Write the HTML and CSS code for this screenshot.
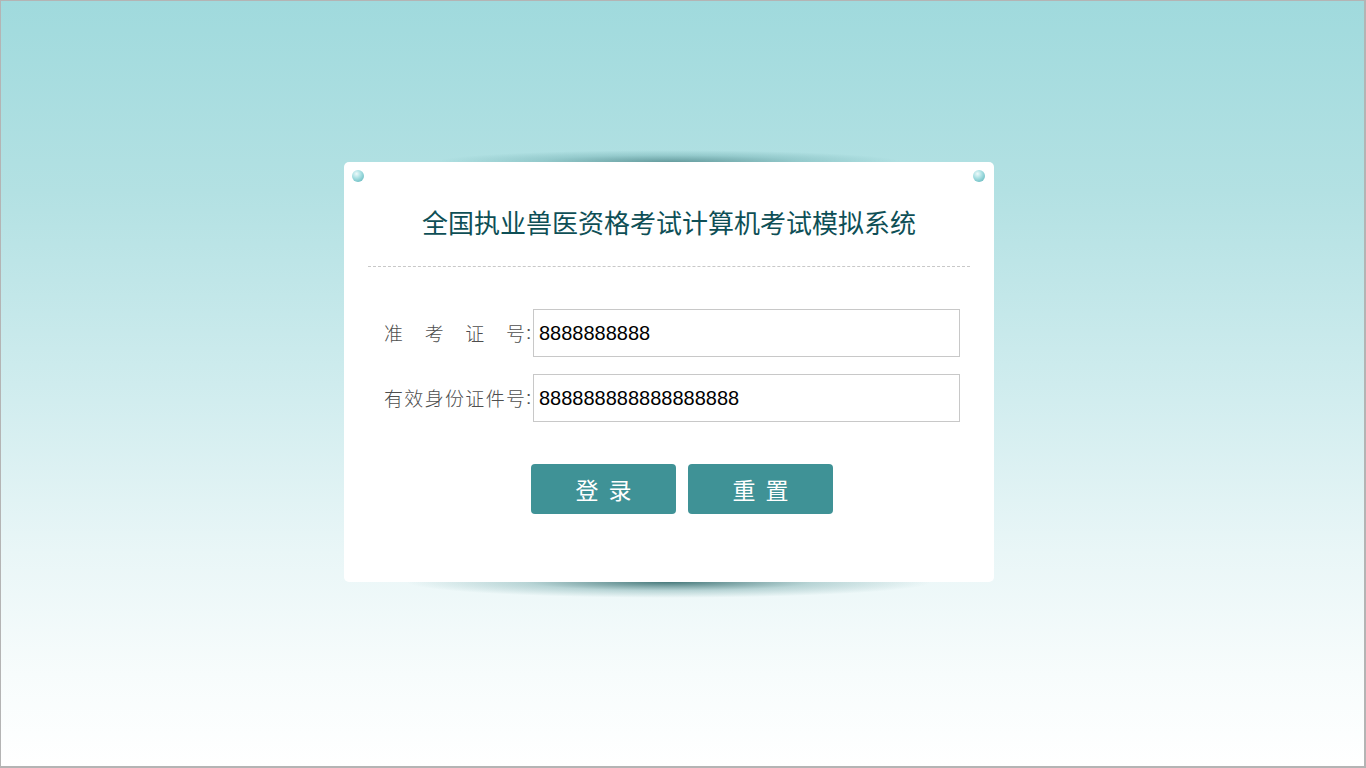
FILE: index.html
```html
<!DOCTYPE html>
<html lang="zh-CN">
<head>
<meta charset="utf-8">
<title>全国执业兽医资格考试计算机考试模拟系统</title>
<link rel="stylesheet" href="styles.css">
</head>
<body>
<div class="frame">
  <div class="card">
    <span class="pin pin-left"></span>
    <span class="pin pin-right"></span>
    <div class="header">
      <h1 class="title">全国执业兽医资格考试计算机考试模拟系统</h1>
    </div>
    <form class="form">
      <div class="row">
        <label class="label"><span class="label-text">准考证号</span><span class="colon">:</span></label>
        <input class="field" type="text" value="8888888888">
      </div>
      <div class="row">
        <label class="label"><span class="label-text">有效身份证件号</span><span class="colon">:</span></label>
        <input class="field" type="text" value="888888888888888888">
      </div>
      <div class="actions">
        <button type="button" class="btn">登录</button>
        <button type="button" class="btn">重置</button>
      </div>
    </form>
  </div>
</div>
</body>
</html>
```

FILE: styles.css
```css
* { box-sizing: border-box; }
html, body { margin: 0; padding: 0; }
body {
  font-family: "Noto Sans CJK SC", "Noto Sans", sans-serif;
}
.frame {
  position: relative;
  z-index: 0;
  width: 1366px;
  height: 768px;
  border: 1px solid #b4b4b4;
  border-right-width: 2px;
  border-bottom-width: 2px;
  background: linear-gradient(180deg, #a0dadd 0%, #b3e1e3 25%, #cfecee 50%, #e9f6f7 72%, #f7fcfc 88%, #ffffff 100%);
  padding-top: 161px;
  padding-left: 343px;
}
.card {
  position: relative;
  width: 650px;
  height: 420px;
  background: #fff;
  border-radius: 5px;
}
.card::before,
.card::after {
  content: "";
  position: absolute;
  z-index: -1;
}
.card::before {
  top: -12px;
  left: 90px;
  right: 90px;
  height: 24px;
  background: radial-gradient(ellipse at center, rgba(40, 100, 102, 0.55) 0%, rgba(70, 140, 142, 0.25) 40%, rgba(120, 180, 182, 0) 70%);
}
.card::after {
  bottom: -16px;
  left: 60px;
  right: 60px;
  height: 32px;
  background: radial-gradient(ellipse at center, rgba(30, 90, 92, 0.8) 0%, rgba(60, 130, 132, 0.3) 38%, rgba(120, 180, 182, 0) 70%);
}
.pin {
  position: absolute;
  top: 8px;
  width: 12px;
  height: 12px;
  border-radius: 50%;
  background: radial-gradient(circle at 38% 32%, #eefafa 0%, #a9e0e3 40%, #6fbfc4 80%, #5aaeb4 100%);
}
.pin-left { left: 8px; }
.pin-right { right: 9px; }
.header {
  margin: 0 24px;
  padding: 40px 0 24px;
  border-bottom: 1px dashed #c8c8c8;
  text-align: center;
}
.title {
  margin: 0;
  font-size: 26px;
  line-height: 40px;
  font-weight: 400;
  color: #0e4f56;
}
.form {
  margin: 0;
  padding: 42px 0 0 40px;
}
.row {
  display: flex;
  align-items: center;
  height: 48px;
  margin-bottom: 17px;
}
.label {
  display: flex;
  width: 149px;
  font-size: 19px;
  font-weight: 300;
  color: #4e4e4e;
  line-height: 24px;
}
.label-text {
  flex: 1;
  text-align: justify;
  text-align-last: justify;
}
.colon {
  width: 8px;
  font-family: "Liberation Sans", sans-serif;
  text-align: left;
  padding-left: 1px;
}
.field {
  width: 427px;
  height: 48px;
  border: 1px solid #c8c8c8;
  padding: 0 5px;
  font-family: "Liberation Sans", Arial, sans-serif;
  font-size: 20px;
  color: #000;
  outline: none;
  background: #fff;
}
.actions {
  display: flex;
  gap: 12px;
  margin-top: 42px;
  padding-left: 147px;
}
.btn {
  width: 145px;
  height: 50px;
  border: 0;
  border-radius: 4px;
  background: #3f9296;
  color: #fff;
  font-family: "Noto Sans CJK SC", sans-serif;
  font-size: 23px;
  letter-spacing: 10px;
  text-indent: 10px;
  padding: 0;
  cursor: pointer;
}
```
